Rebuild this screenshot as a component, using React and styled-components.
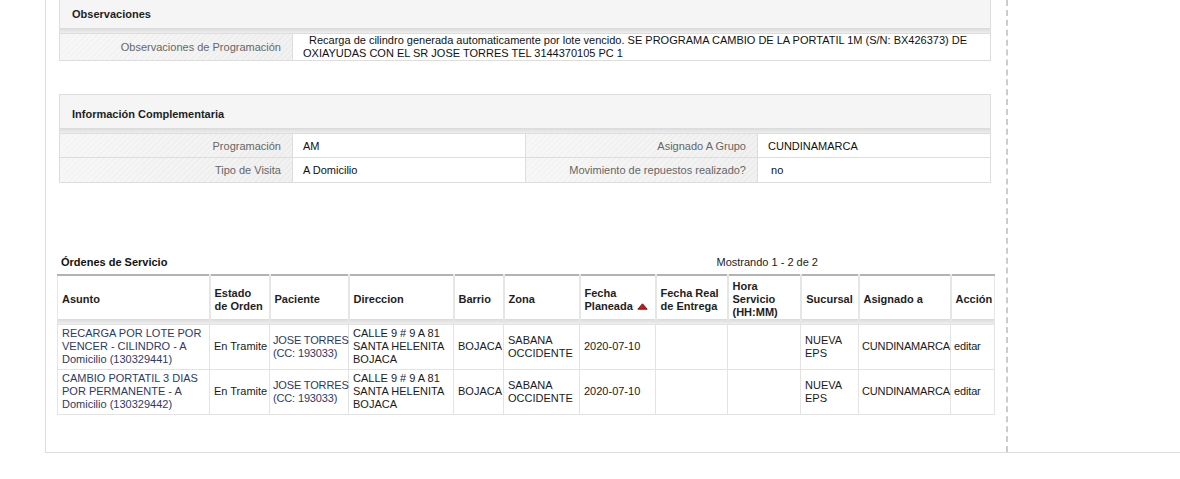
import React from 'react';
import styled, { createGlobalStyle } from 'styled-components';

const GlobalStyle = createGlobalStyle`
  body {
    margin: 0;
    background: #fff;
    font-family: 'Liberation Sans', Arial, sans-serif;
    font-size: 11px;
    color: #222;
  }
`;

const Frame = styled.div`
  display: flex;
  height: 453px;
  margin-left: 45px;
  border-left: 1px solid #ddd;
  border-bottom: 1px solid #ddd;
  box-sizing: border-box;
  overflow: hidden;
`;

const Main = styled.div`
  width: 962px;
  flex-shrink: 0;
  box-sizing: border-box;
  padding: 0 12px 0 11px;
  border-right: 2px dashed #ccc;
`;

const Panel = styled.section`
  margin: ${(p) => p.$top}px 3px 0 2px;
  border: 1px solid #ddd;
`;

const PanelHeader = styled.h3`
  margin: 0;
  height: 38px;
  box-sizing: border-box;
  padding: 4px 12px 5px;
  display: flex;
  align-items: center;
  font-size: 11px;
  font-weight: bold;
  color: #1e1e1e;
  background: linear-gradient(
    to bottom,
    #f5f5f5 0,
    #f5f5f5 33px,
    #d9d9d9 33px,
    #eeeeee 38px
  );
`;

const FieldRow = styled.div`
  display: grid;
  grid-template-columns: ${(p) => (p.$pairs === 2 ? '233px 1fr 233px 1fr' : '233px 1fr')};
  min-height: ${(p) => p.$height || 24}px;
  border-top: 1px solid #ddd;
`;

const Label = styled.div`
  display: flex;
  align-items: center;
  justify-content: flex-end;
  padding: 0 11px;
  color: #666;
  background:
    repeating-linear-gradient(135deg, rgba(255, 255, 255, 0.3) 0 2px, transparent 2px 4px),
    linear-gradient(to right, #f4f4f4, #ececec);
  border-right: 1px solid #ddd;
`;

const Value = styled.div`
  display: flex;
  align-items: center;
  padding: 0 10px;
  color: #111;
  & + ${Label} {
    border-left: 1px solid #ddd;
  }
`;

const Note = styled.div`
  padding: 0 10px;
  line-height: 13px;
  color: #111;
  text-indent: 6px;
  align-self: center;
`;

const Orders = styled.div`
  margin-top: 73px;
`;

const OrdersBar = styled.div`
  display: grid;
  grid-template-columns: 1fr auto 172px;
  padding: 0 4px;
  line-height: 13px;
  margin-bottom: 5px;
`;

const OrdersTitle = styled.span`
  font-weight: bold;
  color: #111;
`;

const Paging = styled.span`
  color: #222;
`;

const Table = styled.table`
  width: 937px;
  table-layout: fixed;
  border-collapse: collapse;
  border-top: 2px solid #b3b3b3;
  font-size: 11px;
  line-height: 13px;
`;

const Col = styled.col`
  width: ${(p) => p.$w}px;
`;

const Th = styled.th`
  box-sizing: border-box;
  padding: 4px 4px 5px;
  text-align: ${(p) => p.$align || 'left'};
  vertical-align: middle;
  font-weight: bold;
  color: #1e1e1e;
  white-space: nowrap;
  border-left: 2px solid #e6e6e6;
  background: linear-gradient(
    to bottom,
    #fff 0,
    #fff calc(100% - 5px),
    #d9d9d9 calc(100% - 5px),
    #efefef 100%
  );
  &:first-child {
    border-left: 1px solid #e6e6e6;
  }
  &:last-child {
    border-right: 1px solid #e6e6e6;
  }
`;

const Td = styled.td`
  box-sizing: border-box;
  height: 45px;
  padding: 2px ${(p) => (p.$tight ? 2 : 4)}px 3px ${(p) => (p.$tight ? 3 : 4)}px;
  vertical-align: middle;
  color: #1a1a1a;
  white-space: nowrap;
  letter-spacing: ${(p) => (p.$tight ? '-0.15px' : 'normal')};
  border: 1px solid #e3e3e3;
`;

const LinkText = styled.span`
  color: #2d3a64;
`;

const Lines = ({ lines }) =>
  lines.map((l, i) => (
    <React.Fragment key={i}>
      {i > 0 && <br />}
      {l}
    </React.Fragment>
  ));

const SortArrow = () => (
  <svg width="11" height="7" viewBox="0 0 11 7" style={{ marginLeft: 4, verticalAlign: 0 }}>
    <polygon points="5.5,0.8 10.2,6.2 0.8,6.2" fill="#dd1111" stroke="#6b0d0d" strokeWidth="0.9" />
  </svg>
);

const columns = [
  { key: 'asunto', title: ['Asunto'], w: 152 },
  { key: 'estado', title: ['Estado', 'de Orden'], w: 60 },
  { key: 'paciente', title: ['Paciente'], w: 79 },
  { key: 'direccion', title: ['Direccion'], w: 105 },
  { key: 'barrio', title: ['Barrio'], w: 50 },
  { key: 'zona', title: ['Zona'], w: 76 },
  { key: 'fecha', title: ['Fecha', 'Planeada'], w: 76, sorted: true },
  { key: 'real', title: ['Fecha Real', 'de Entrega'], w: 72 },
  { key: 'hora', title: ['Hora', 'Servicio', '(HH:MM)'], w: 73 },
  { key: 'sucursal', title: ['Sucursal'], w: 58, align: 'center' },
  { key: 'asignado', title: ['Asignado a'], w: 92 },
  { key: 'accion', title: ['Acción'], w: 44 },
];

const orders = [
  {
    id: 130329441,
    asunto: ['RECARGA POR LOTE POR', 'VENCER - CILINDRO - A', 'Domicilio (130329441)'],
  },
  {
    id: 130329442,
    asunto: ['CAMBIO PORTATIL 3 DIAS', 'POR PERMANENTE - A', 'Domicilio (130329442)'],
  },
];

const App = () => {
  return (
    <>
      <GlobalStyle />
      <Frame>
        <Main>
          <Panel $top={-6}>
            <PanelHeader>Observaciones</PanelHeader>
            <FieldRow $height={26}>
              <Label>Observaciones de Programación</Label>
              <Note>
                Recarga de cilindro generada automaticamente por lote vencido. SE PROGRAMA CAMBIO DE LA
                PORTATIL 1M (S/N: BX426373) DE OXIAYUDAS CON EL SR JOSE TORRES TEL 3144370105 PC 1
              </Note>
            </FieldRow>
          </Panel>

          <Panel $top={33}>
            <PanelHeader>Información Complementaria</PanelHeader>
            <FieldRow $pairs={2} $height={23}>
              <Label>Programación</Label>
              <Value>AM</Value>
              <Label>Asignado A Grupo</Label>
              <Value>CUNDINAMARCA</Value>
            </FieldRow>
            <FieldRow $pairs={2} $height={24}>
              <Label>Tipo de Visita</Label>
              <Value>A Domicilio</Value>
              <Label>Movimiento de repuestos realizado?</Label>
              <Value>&nbsp;no</Value>
            </FieldRow>
          </Panel>

          <Orders>
            <OrdersBar>
              <OrdersTitle>Órdenes de Servicio</OrdersTitle>
              <Paging>Mostrando 1 - 2 de 2</Paging>
              <span />
            </OrdersBar>
            <Table>
              <colgroup>
                {columns.map((c) => (
                  <Col key={c.key} $w={c.w} />
                ))}
              </colgroup>
              <thead>
                <tr>
                  {columns.map((c) => (
                    <Th key={c.key} $align={c.align}>
                      <Lines lines={c.title} />
                      {c.sorted && <SortArrow />}
                    </Th>
                  ))}
                </tr>
              </thead>
              <tbody>
                {orders.map((o) => (
                  <tr key={o.id}>
                    <Td>
                      <LinkText>
                        <Lines lines={o.asunto} />
                      </LinkText>
                    </Td>
                    <Td>En Tramite</Td>
                    <Td $tight>
                      <LinkText>
                        <Lines lines={['JOSE TORRES', '(CC: 193033)']} />
                      </LinkText>
                    </Td>
                    <Td>
                      <Lines lines={['CALLE 9 # 9 A 81', 'SANTA HELENITA', 'BOJACA']} />
                    </Td>
                    <Td>BOJACA</Td>
                    <Td>
                      <Lines lines={['SABANA', 'OCCIDENTE']} />
                    </Td>
                    <Td>2020-07-10</Td>
                    <Td />
                    <Td />
                    <Td>
                      <Lines lines={['NUEVA', 'EPS']} />
                    </Td>
                    <Td $tight>CUNDINAMARCA</Td>
                    <Td $tight>editar</Td>
                  </tr>
                ))}
              </tbody>
            </Table>
          </Orders>
        </Main>
      </Frame>
    </>
  );
};

export default App;
